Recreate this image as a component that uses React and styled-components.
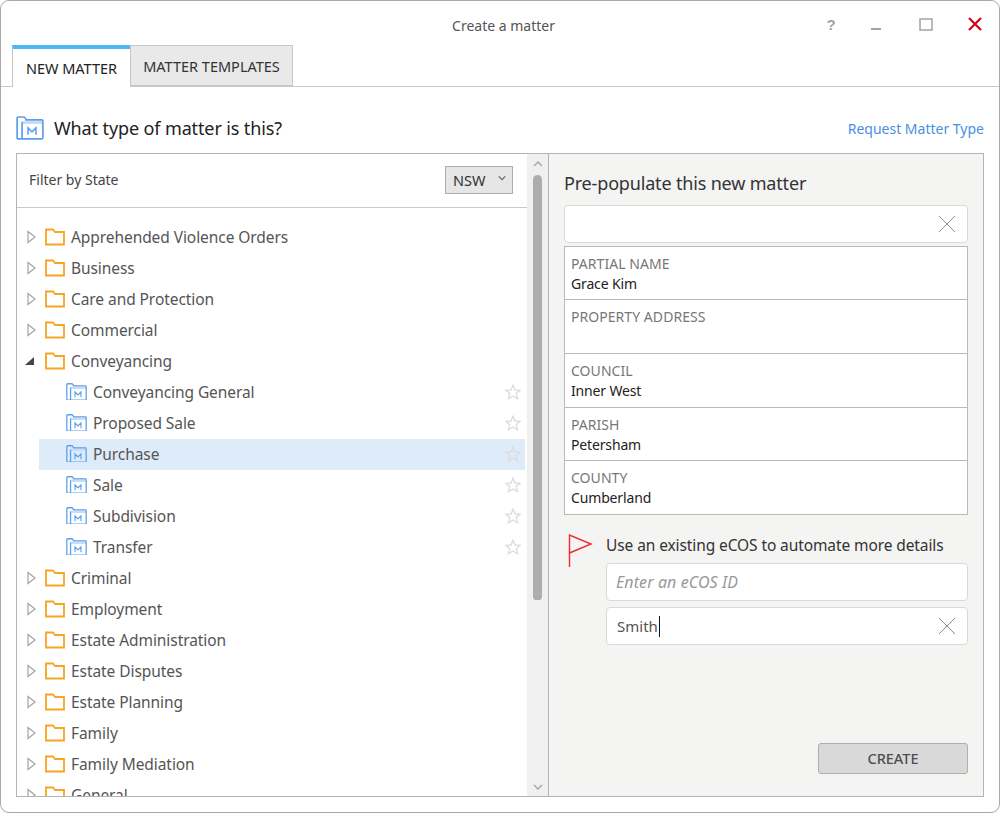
import React from "react";
import styled, { createGlobalStyle } from "styled-components";

const Global = createGlobalStyle`
  html, body { margin: 0; padding: 0; background: #fff; }
  body { font-family: "Noto Sans", "Open Sans", sans-serif; }
  * { box-sizing: border-box; }
`;

const Win = styled.div`
  width: 1000px; height: 813px; background: #fff;
  border: 1px solid #a9a9a9; border-radius: 9px;
  display: flex; flex-direction: column; overflow: hidden;
`;
const TitleBar = styled.div`
  height: 44px; flex: none; display: grid; grid-template-columns: 1fr auto 1fr; align-items: center;
  padding: 0 17px 0 24px;
`;
const Title = styled.div`
  grid-column: 2; font-size: 14px; color: #555; margin-top: 4px;
`;
const Controls = styled.div`
  grid-column: 3; justify-self: end; display: flex; align-items: center; margin-top: 2px; gap: 35px;
`;
const Ctl = styled.span`
  display: flex; width: ${p => p.$w}px; justify-content: center; align-items: center; height: 20px;
  margin-left: ${p => p.$ml || 0}px;
`;
const Q = styled.span`
  font: bold 15px "Liberation Sans", sans-serif; color: #a3a3a3;
`;
const Tabs = styled.div`
  height: 42px; flex: none; display: flex; padding-left: 11px; border-bottom: 1px solid #c9c9c9;
`;
const Tab = styled.div`
  height: ${p => (p.$active ? 42 : 41)}px; font-size: 14.5px; display: flex; align-items: center; justify-content: center;
  width: ${p => p.$w}px;
  color: ${p => (p.$active ? "#222" : "#333")};
  background: ${p => (p.$active ? "#fff" : "#e9e9e9")};
  border: 1px solid #c6c6c6;
  border-top: ${p => (p.$active ? "4px solid #4cb9f6" : "1px solid #c6c6c6")};
  border-bottom: ${p => (p.$active ? "none" : "1px solid #c6c6c6")};
  border-right: ${p => (p.$active ? "none" : "1px solid #c6c6c6")};
`;
const Heading = styled.div`
  height: 66px; flex: none; display: flex; align-items: center; padding: 16px 15px 0 15px;
`;
const HeadText = styled.div`
  font-size: 18px; color: #222; margin-left: 10px; flex: 1; letter-spacing: -0.12px;
`;
const Link = styled.div`
  font-size: 14px; color: #4a90e2;
`;
const Panel = styled.div`
  margin-left: 15px; width: 968px; height: 644px; border: 1px solid #b5b5b5; display: flex; flex: none;
`;
const Left = styled.div`
  width: 510px; flex: none; display: flex; flex-direction: column; overflow: hidden;
`;
const FilterRow = styled.div`
  height: 54px; flex: none; border-bottom: 1px solid #c9c9c9; display: flex; align-items: center;
  justify-content: space-between; padding: 0 14px 2px 12px; font-size: 14px; color: #444;
`;
const Select = styled.div`
  width: 68px; height: 28px; background: #e6e6e6; border: 1px solid #adadad; display: flex; align-items: center;
  padding-left: 7px; gap: 13px; font-size: 14.5px; color: #333;
`;
const SelectChevron = styled.span`
  display: flex; margin-bottom: 4px;
`;
const Tree = styled.div`
  flex: 1; overflow: hidden; padding-top: 14px;
`;
const Row = styled.div`
  height: 31px; display: flex; align-items: center; font-size: 15.5px; color: #555;
  margin-left: ${p => (p.$child ? 22 : 0)}px;
  margin-right: 2px;
  padding: 0 4px 2px ${p => (p.$child ? 27 : 8)}px;
  background: ${p => (p.$sel ? "#deebf8" : "transparent")};
`;
const RowText = styled.span`
  margin-left: 6px; flex: 1; white-space: nowrap; letter-spacing: -0.07px;
`;
const Scroll = styled.div`
  width: 22px; flex: none; background: #f0f0f0; border-right: 1px solid #b5b5b5;
  display: flex; flex-direction: column; align-items: center; padding-top: 7px; padding-bottom: 6px;
`;
const Thumb = styled.div`
  width: 9px; height: 425px; margin-top: 8px; background: #adadad; border-radius: 5px 5px 4px 4px; margin-left: -1px;
`;
const Spacer = styled.div`flex: 1;`;
const Right = styled.div`
  flex: 1; background: #f4f4f3; padding: 17px 15px 0 15px; display: flex; flex-direction: column;
`;
const RightTitle = styled.div`
  font-size: 18px; line-height: 24px; color: #333; height: 34px; letter-spacing: -0.17px;
`;
const Field = styled.div`
  height: ${p => p.$h || 38}px; background: #fff; border: 1px solid #d9d9d9; border-radius: 4px;
  display: flex; align-items: center; padding: 0 11px 0 10px; font-size: 15px; color: #555;
  margin-left: ${p => p.$indent || 0}px; flex: none;
`;
const FieldText = styled.span`
  flex: 1; display: flex; align-items: center;
`;
const Placeholder = styled.span`
  flex: 1; font-style: italic; color: #999; font-size: 16px; margin-left: -1px; letter-spacing: 0.1px;
`;
const Caret = styled.span`
  width: 1px; height: 21px; background: #111; margin-left: 1px;
`;
const Table = styled.div`
  margin-top: 3px; background: #fff; border: 1px solid #b9b9b9; flex: none;
`;
const Cell = styled.div`
  height: ${p => p.$h}px; padding: 7px 6px 0; border-top: ${p => (p.$first ? "none" : "1px solid #b9b9b9")};
`;
const CellLabel = styled.div`
  font-size: 14px; line-height: 20px; color: #777; letter-spacing: 0.05px;
`;
const CellValue = styled.div`
  font-size: 14px; line-height: 20px; color: #222; min-height: 20px; letter-spacing: -0.15px;
`;
const Ecos = styled.div`
  margin-top: 20px; display: flex; flex: none; align-items: flex-start; height: 28px;
`;
const EcosText = styled.div`
  font-size: 15.5px; color: #333; margin-left: 13px; line-height: 20px; letter-spacing: -0.1px;
`;
const FlagBox = styled.div`
  width: 29px; padding-left: 4px; height: 28px; margin-top: -1px;
`;
const Gap = styled.div`height: ${p => p.$h}px; flex: none;`;
const Create = styled.div`
  margin-left: 254px; width: 150px; height: 31px; background: #d9d9d9; border: 1px solid #aeaeae; border-radius: 3px;
  display: flex; align-items: center; justify-content: center; font-size: 14.5px; color: #4d4d4d; flex: none;
  padding-bottom: 2px; font-weight: 500;
`;

const Tri = ({ open }) => open ? (
  <svg width="16" height="14" viewBox="0 0 16 14" style={{ flex: "none" }}><path d="M0 11 L9 11 L9 3 Z" fill="#444" /></svg>
) : (
  <svg width="16" height="14" viewBox="0 0 16 14" style={{ flex: "none" }}><path d="M3 1.5 L10 7 L3 12.5 Z" fill="none" stroke="#a3a3a3" strokeWidth="1.2" /></svg>
);
const Folder = () => (
  <svg width="20" height="18" viewBox="0 0 20 18" style={{ marginLeft: 4, flex: "none" }}>
    <path d="M1 16.5 V1.5 H8 L10 4 H19 V16.5 Z" fill="#fff" stroke="#f5a623" strokeWidth="1.8" />
  </svg>
);
const MatterIcon = ({ size = 21 }) => (
  <svg width={size} height={size * 0.85} viewBox="0 0 28 24" style={{ flex: "none" }}>
    <path d="M6 5 H27 V8 H6 Z" fill="#c8dcf6" />
    <path d="M6 23 H2 Q1 23 1 22 V2 Q1 1 2 1 H8 L10 3 V4 H26 Q27 4 27 5 V22 Q27 23 26 23 H6 V6" fill="none" stroke="#5a9fee" strokeWidth="1.7" />
    <path d="M12 19 V12 L16 16 L20 12 V19" fill="none" stroke="#5a9fee" strokeWidth="1.5" />
  </svg>
);
const Star = () => (
  <svg width="16" height="16" viewBox="0 0 16 16" style={{ flex: "none" }}>
    <path d="M8 1.2 L10 6 L15.2 6.3 L11.2 9.6 L12.6 14.7 L8 12 L3.4 14.7 L4.8 9.6 L.8 6.3 L6 6 Z" fill="none" stroke="#dcdcdc" strokeWidth="1.3" />
  </svg>
);
const Cross = () => (
  <svg width="18" height="18" viewBox="0 0 18 18" style={{ flex: "none" }}>
    <path d="M1 1 L17 17 M17 1 L1 17" stroke="#8c8c8c" strokeWidth="1" />
  </svg>
);
const Chev = ({ up, color = "#aaa", w = 10 }) => (
  <svg width={w} height="6" viewBox="0 0 10 6" style={{ flex: "none" }}>
    <path d={up ? "M1 5 L5 1 L9 5" : "M1 1 L5 5 L9 1"} fill="none" stroke={color} strokeWidth="1.5" />
  </svg>
);

const top1 = ["Apprehended Violence Orders", "Business", "Care and Protection", "Commercial"];
const kids = ["Conveyancing General", "Proposed Sale", "Purchase", "Sale", "Subdivision", "Transfer"];
const top2 = ["Criminal", "Employment", "Estate Administration", "Estate Disputes", "Estate Planning", "Family", "Family Mediation", "General"];
const cells = [
  ["PARTIAL NAME", "Grace Kim", 52],
  ["PROPERTY ADDRESS", "", 54],
  ["COUNCIL", "Inner West", 54],
  ["PARISH", "Petersham", 53],
  ["COUNTY", "Cumberland", 54],
];

const Parent = ({ name, open }) => (
  <Row><Tri open={open} /><Folder /><RowText>{name}</RowText></Row>
);

export default function App() {
  return (
    <Win>
      <Global />
      <TitleBar>
        <Title>Create a matter</Title>
        <Controls>
          <Ctl $w={10}><Q>?</Q></Ctl>
          <Ctl $w={10}>
            <svg width="10" height="12" viewBox="0 0 10 12"><path d="M0 11 H10" stroke="#a3a3a3" strokeWidth="2" /></svg>
          </Ctl>
          <Ctl $w={14} $ml={3}>
            <svg width="14" height="13" viewBox="0 0 14 13"><rect x="1" y="1" width="12" height="11" fill="none" stroke="#a3a3a3" strokeWidth="1.5" /></svg>
          </Ctl>
          <Ctl $w={14}>
            <svg width="14" height="14" viewBox="0 0 14 14"><path d="M1 1 L13 13 M13 1 L1 13" stroke="#d0021b" strokeWidth="2.2" /></svg>
          </Ctl>
        </Controls>
      </TitleBar>
      <Tabs>
        <Tab $active $w={118}>NEW MATTER</Tab>
        <Tab $w={163}>MATTER TEMPLATES</Tab>
      </Tabs>
      <Heading>
        <MatterIcon size={28} />
        <HeadText>What type of matter is this?</HeadText>
        <Link>Request Matter Type</Link>
      </Heading>
      <Panel>
        <Left>
          <FilterRow>
            <span>Filter by State</span>
            <Select>NSW <SelectChevron><Chev color="#666" w={8} /></SelectChevron></Select>
          </FilterRow>
          <Tree>
            {top1.map(n => <Parent key={n} name={n} />)}
            <Parent name="Conveyancing" open />
            {kids.map(n => (
              <Row key={n} $child $sel={n === "Purchase"}>
                <MatterIcon size={21} />
                <RowText>{n}</RowText>
                <Star />
              </Row>
            ))}
            {top2.map(n => <Parent key={n} name={n} />)}
          </Tree>
        </Left>
        <Scroll>
          <Chev up />
          <Thumb />
          <Spacer />
          <Chev />
        </Scroll>
        <Right>
          <RightTitle>Pre-populate this new matter</RightTitle>
          <Field><FieldText /><Cross /></Field>
          <Table>
            {cells.map(([l, v, h], i) => (
              <Cell key={l} $h={h} $first={i === 0}>
                <CellLabel>{l}</CellLabel>
                <CellValue>{v}</CellValue>
              </Cell>
            ))}
          </Table>
          <Ecos>
            <FlagBox>
              <svg width="25" height="34" viewBox="0 0 25 34"><path d="M1.5 33 V1 L23 10 L1.5 19" fill="none" stroke="#ee2a35" strokeWidth="1.4" /></svg>
            </FlagBox>
            <EcosText>Use an existing eCOS to automate more details</EcosText>
          </Ecos>
          <Field $indent={42}><Placeholder>Enter an eCOS ID</Placeholder></Field>
          <Gap $h={6} />
          <Field $indent={42}>
            <FieldText>Smith<Caret /></FieldText>
            <Cross />
          </Field>
          <Gap $h={98} />
          <Create>CREATE</Create>
        </Right>
      </Panel>
    </Win>
  );
}
